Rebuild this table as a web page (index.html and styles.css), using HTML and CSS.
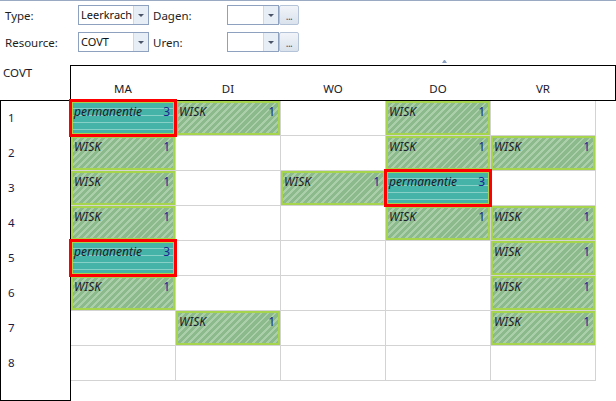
FILE: index.html
```html
<!DOCTYPE html>
<html>
<head>
<meta charset="utf-8">
<link rel="stylesheet" href="styles.css">
</head>
<body>
<div class="topline"></div>
<div class="form">
  <div class="frow">
    <span class="lbl l1">Type:</span>
    <div class="combo wide"><span class="cval">Leerkrach</span><span class="dd"><i class="arr"></i></span></div>
    <span class="lbl l2">Dagen:</span>
    <div class="combo narrow"><span class="cval"></span><span class="dd"><i class="arr"></i></span></div>
    <span class="ell">...</span>
  </div>
  <div class="frow">
    <span class="lbl l1">Resource:</span>
    <div class="combo wide"><span class="cval">COVT</span><span class="dd"><i class="arr"></i></span></div>
    <span class="lbl l2">Uren:</span>
    <div class="combo narrow"><span class="cval"></span><span class="dd"><i class="arr"></i></span></div>
    <span class="ell">...</span>
  </div>
</div>
<div class="grip-row"><span class="grip"></span></div>
<div class="sched">
  <div class="corner">COVT</div>
  <div class="head"><span>MA</span><span>DI</span><span>WO</span><span>DO</span><span>VR</span></div>
  <div class="rows"><span>1</span><span>2</span><span>3</span><span>4</span><span>5</span><span>6</span><span>7</span><span>8</span></div>
  <div class="body">
    <!-- row 1 -->
    <div class="c"><div class="ev perm"><span class="t">permanentie</span><span class="n">3</span></div></div>
    <div class="c"><div class="ev wisk"><span class="t">WISK</span><span class="n">1</span></div></div>
    <div class="c"></div>
    <div class="c"><div class="ev wisk"><span class="t">WISK</span><span class="n">1</span></div></div>
    <div class="c"></div>
    <!-- row 2 -->
    <div class="c"><div class="ev wisk"><span class="t">WISK</span><span class="n">1</span></div></div>
    <div class="c"></div>
    <div class="c"></div>
    <div class="c"><div class="ev wisk"><span class="t">WISK</span><span class="n">1</span></div></div>
    <div class="c"><div class="ev wisk"><span class="t">WISK</span><span class="n">1</span></div></div>
    <!-- row 3 -->
    <div class="c"><div class="ev wisk"><span class="t">WISK</span><span class="n">1</span></div></div>
    <div class="c"></div>
    <div class="c"><div class="ev wisk"><span class="t">WISK</span><span class="n">1</span></div></div>
    <div class="c"><div class="ev perm"><span class="t">permanentie</span><span class="n">3</span></div></div>
    <div class="c"></div>
    <!-- row 4 -->
    <div class="c"><div class="ev wisk"><span class="t">WISK</span><span class="n">1</span></div></div>
    <div class="c"></div>
    <div class="c"></div>
    <div class="c"><div class="ev wisk"><span class="t">WISK</span><span class="n">1</span></div></div>
    <div class="c"><div class="ev wisk"><span class="t">WISK</span><span class="n">1</span></div></div>
    <!-- row 5 -->
    <div class="c"><div class="ev perm"><span class="t">permanentie</span><span class="n">3</span></div></div>
    <div class="c"></div>
    <div class="c"></div>
    <div class="c"></div>
    <div class="c"><div class="ev wisk"><span class="t">WISK</span><span class="n">1</span></div></div>
    <!-- row 6 -->
    <div class="c"><div class="ev wisk"><span class="t">WISK</span><span class="n">1</span></div></div>
    <div class="c"></div>
    <div class="c"></div>
    <div class="c"></div>
    <div class="c"><div class="ev wisk"><span class="t">WISK</span><span class="n">1</span></div></div>
    <!-- row 7 -->
    <div class="c"></div>
    <div class="c"><div class="ev wisk"><span class="t">WISK</span><span class="n">1</span></div></div>
    <div class="c"></div>
    <div class="c"></div>
    <div class="c"><div class="ev wisk"><span class="t">WISK</span><span class="n">1</span></div></div>
    <!-- row 8 -->
    <div class="c"></div>
    <div class="c"></div>
    <div class="c"></div>
    <div class="c"></div>
    <div class="c"></div>
  </div>
</div>
</body>
</html>
```
FILE: styles.css
```css
html, body {
  margin: 0;
  padding: 0;
  background: #fff;
}
body {
  width: 616px;
  height: 401px;
  overflow: hidden;
  font-family: "Noto Sans", "DejaVu Sans", sans-serif;
  font-size: 11.5px;
  color: #1e1e1e;
}
.topline {
  height: 1px;
  background: #9aaac2;
}
.form {
  padding-top: 4px;
  display: flex;
  flex-direction: column;
  gap: 7px;
}
.frow {
  display: flex;
  align-items: center;
  height: 20px;
}
.lbl {
  line-height: 15px;
}
.l1 {
  width: 78px;
  padding-left: 5px;
  box-sizing: border-box;
}
.l2 {
  width: 74px;
  margin-left: 4px;
}
.combo {
  height: 20px;
  box-sizing: border-box;
  border: 1px solid #8ea2c0;
  display: flex;
  background: #fff;
}
.combo.wide { width: 71px; }
.combo.narrow { width: 52px; }
.cval {
  flex: 1;
  padding-left: 2px;
  line-height: 18px;
  font-size: 11px;
  color: #111;
  overflow: hidden;
  white-space: nowrap;
}
.dd {
  width: 14px;
  border-left: 1px solid #cfd9e6;
  background: #e8eef6;
  display: flex;
  align-items: center;
  justify-content: center;
}
.arr {
  width: 0;
  height: 0;
  border-left: 3px solid transparent;
  border-right: 3px solid transparent;
  border-top: 3px solid #4a5468;
}
.ell {
  width: 20px;
  height: 20px;
  box-sizing: border-box;
  border: 1px solid #b4c3d7;
  border-radius: 2px;
  background: linear-gradient(#f1f4f9, #dae2ed);
  color: #3b4f7a;
  font-size: 10px;
  line-height: 20px;
  text-align: center;
  letter-spacing: -0.5px;
}
.grip-row {
  height: 13px;
  display: flex;
  align-items: flex-start;
}
.grip {
  margin-top: 8px;
  margin-left: 442px;
  width: 1px;
  height: 0;
  border-left: 2px solid transparent;
  border-right: 2px solid transparent;
  border-bottom: 3px solid #8aa0c0;
}
.sched {
  display: grid;
  grid-template-columns: 70px 546px;
  grid-template-rows: 35px 301px;
}
.corner {
  padding: 0 0 0 3px;
  line-height: 15px;
  color: #1a1a2a;
}
.head {
  height: 36px;
  margin-bottom: -1px;
  box-sizing: border-box;
  border: 1px solid #000;
  display: grid;
  grid-template-columns: repeat(5, 105px);
  align-items: end;
  padding-bottom: 4px;
}
.head span {
  text-align: center;
  line-height: 15px;
  color: #1a1a2a;
  margin-left: -1px;
}
.rows {
  margin-right: -1px;
  height: 301px;
  box-sizing: border-box;
  border: 1px solid #000;
  display: grid;
  grid-template-rows: repeat(8, 35px);
  align-content: start;
}
.rows span {
  display: flex;
  align-items: center;
  padding: 0 0 2px 7px;
  line-height: 15px;
  color: #1a1a40;
}
.body {
  padding: 1px 0 0 1px;
  display: grid;
  grid-template-columns: repeat(5, 105px);
  grid-template-rows: repeat(8, 35px);
  align-content: start;
}
.c {
  border-right: 1px solid #d3d3d3;
  border-bottom: 1px solid #d3d3d3;
}
.ev {
  height: 100%;
  box-sizing: border-box;
  border: 2px solid #a6d44c;
  display: flex;
  justify-content: space-between;
  align-items: flex-start;
  padding: 1px 3px 0 1px;
  line-height: 15px;
  font-size: 12px;
}
.ev .t {
  font-style: italic;
  color: #1c1c28;
}
.ev .n {
  color: #1c2490;
}
.wisk {
  background: repeating-linear-gradient(135deg, #8cba8c 0 3px, #abcfab 3px 5px);
}
.perm {
  background: repeating-linear-gradient(to bottom, #46b3a9 0 5px, #87d0c8 5px 6px, #46b3a9 6px 7px);
  outline: 3px solid #ff0000;
  outline-offset: -1px;
  position: relative;
  z-index: 2;
}
```
